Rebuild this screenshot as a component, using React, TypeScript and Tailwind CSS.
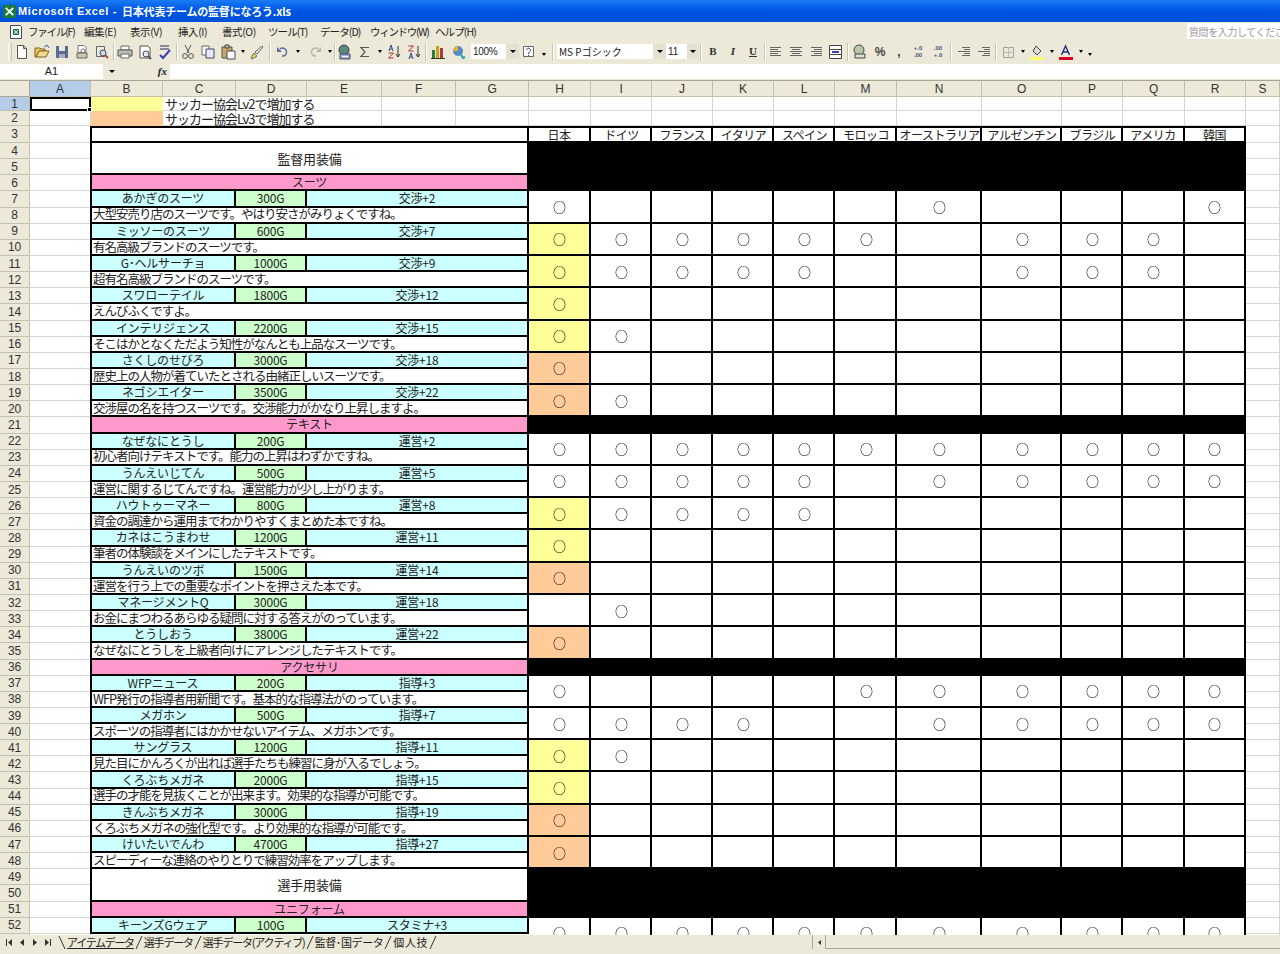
import { ReactNode } from 'react';

const gothic = 'font-["Noto_Sans_CJK_JP","Liberation_Sans",sans-serif]';

const cols = ['A', 'B', 'C', 'D', 'E', 'F', 'G', 'H', 'I', 'J', 'K', 'L', 'M', 'N', 'O', 'P', 'Q', 'R', 'S'];
const countries = ['日本', 'ドイツ', 'フランス', 'イタリア', 'スペイン', 'モロッコ', 'オーストラリア', 'アルゼンチン', 'ブラジル', 'アメリカ', '韓国'];
const markCols = 'HIJKLMNOPQR';
const lastRow = 53;

interface Item {
  row: number;
  name: string;
  price: string;
  effect: string;
  desc: string;
  marks: string;
  tint?: 'y' | 'o';
}

const items: Item[] = [
  { row: 7, name: 'あかぎのスーツ', price: '300G', effect: '交渉+2', desc: '大型安売り店のスーツです。やはり安さがみりょくですね。', marks: 'HNR' },
  { row: 9, name: 'ミッソーのスーツ', price: '600G', effect: '交渉+7', desc: '有名高級ブランドのスーツです。', marks: 'HIJKLMOPQ', tint: 'y' },
  { row: 11, name: 'G･ヘルサーチョ', price: '1000G', effect: '交渉+9', desc: '超有名高級ブランドのスーツです。', marks: 'HIJKLOPQ', tint: 'y' },
  { row: 13, name: 'スワローテイル', price: '1800G', effect: '交渉+12', desc: 'えんびふくですよ。', marks: 'H', tint: 'y' },
  { row: 15, name: 'インテリジェンス', price: '2200G', effect: '交渉+15', desc: 'そこはかとなくただよう知性がなんとも上品なスーツです。', marks: 'HI', tint: 'y' },
  { row: 17, name: 'さくしのせびろ', price: '3000G', effect: '交渉+18', desc: '歴史上の人物が着ていたとされる由緒正しいスーツです。', marks: 'H', tint: 'o' },
  { row: 19, name: 'ネゴシエイター', price: '3500G', effect: '交渉+22', desc: '交渉屋の名を持つスーツです。交渉能力がかなり上昇しますよ。', marks: 'HI', tint: 'o' },
  { row: 22, name: 'なぜなにとうし', price: '200G', effect: '運営+2', desc: '初心者向けテキストです。能力の上昇はわずかですね。', marks: 'HIJKLMNOPQR' },
  { row: 24, name: 'うんえいじてん', price: '500G', effect: '運営+5', desc: '運営に関するじてんですね。運営能力が少し上がります。', marks: 'HIJKLNOPQR' },
  { row: 26, name: 'ハウトゥーマネー', price: '800G', effect: '運営+8', desc: '資金の調達から運用までわかりやすくまとめた本ですね。', marks: 'HIJKL', tint: 'y' },
  { row: 28, name: 'カネはこうまわせ', price: '1200G', effect: '運営+11', desc: '筆者の体験談をメインにしたテキストです。', marks: 'H', tint: 'y' },
  { row: 30, name: 'うんえいのツボ', price: '1500G', effect: '運営+14', desc: '運営を行う上での重要なポイントを押さえた本です。', marks: 'H', tint: 'o' },
  { row: 32, name: 'マネージメントQ', price: '3000G', effect: '運営+18', desc: 'お金にまつわるあらゆる疑問に対する答えがのっています。', marks: 'I' },
  { row: 34, name: 'とうしおう', price: '3800G', effect: '運営+22', desc: 'なぜなにとうしを上級者向けにアレンジしたテキストです。', marks: 'H', tint: 'o' },
  { row: 37, name: 'WFPニュース', price: '200G', effect: '指導+3', desc: 'WFP発行の指導者用新聞です。基本的な指導法がのっています。', marks: 'HMNOPQR' },
  { row: 39, name: 'メガホン', price: '500G', effect: '指導+7', desc: 'スポーツの指導者にはかかせないアイテム、メガホンです。', marks: 'HIJKNOPQR' },
  { row: 41, name: 'サングラス', price: '1200G', effect: '指導+11', desc: '見た目にかんろくが出れば選手たちも練習に身が入るでしょう。', marks: 'HI', tint: 'y' },
  { row: 43, name: 'くろぶちメガネ', price: '2000G', effect: '指導+15', desc: '選手の才能を見抜くことが出来ます。効果的な指導が可能です。', marks: 'H', tint: 'y' },
  { row: 45, name: 'きんぶちメガネ', price: '3000G', effect: '指導+19', desc: 'くろぶちメガネの強化型です。より効果的な指導が可能です。', marks: 'H', tint: 'o' },
  { row: 47, name: 'けいたいでんわ', price: '4700G', effect: '指導+27', desc: 'スピーディーな連絡のやりとりで練習効率をアップします。', marks: 'H', tint: 'o' },
  { row: 52, name: 'キーンズGウェア', price: '100G', effect: 'スタミナ+3', desc: '', marks: 'HIJKLMNOPQR' },
];

const sections = [
  { row: 6, label: 'スーツ' },
  { row: 21, label: 'テキスト' },
  { row: 36, label: 'アクセサリ' },
  { row: 51, label: 'ユニフォーム' },
];

const heads = [
  { row: 4, label: '監督用装備' },
  { row: 49, label: '選手用装備' },
];

const menus = [
  { label: 'ファイル(F)', className: 'w-[56px] tracking-[-1.2px]' },
  { label: '編集(E)', className: 'w-[46px] tracking-[-0.4px]' },
  { label: '表示(V)', className: 'w-[48px] tracking-[-0.4px]' },
  { label: '挿入(I)', className: 'w-[44px] tracking-[-0.4px]' },
  { label: '書式(O)', className: 'w-[46px] tracking-[-0.4px]' },
  { label: 'ツール(T)', className: 'w-[52px] tracking-[-0.9px]' },
  { label: 'データ(D)', className: 'w-[50px] tracking-[-0.9px]' },
  { label: 'ウィンドウ(W)', className: 'w-[65px] tracking-[-1.3px]' },
  { label: 'ヘルプ(H)', className: 'w-[45px] tracking-[-0.9px]' },
];

const tabs = [
  { label: '選手データ', className: 'tracking-[-1.2px]' },
  { label: '選手データ(アクティブ)', className: 'tracking-[-1.2px]' },
  { label: '監督･国データ', className: 'tracking-[-0.4px]' },
  { label: '個人技', className: 'tracking-[0.6px]' },
];

// grid column number of a sheet column letter (the row header takes the first track)
const colOf = (c: string) => cols.indexOf(c) + 2;

// the right border pulls these columns' content 1px left of the reference
const nudge = (c: string) => (c === 'H' || c === 'Q' || c === 'R' ? '' : 'pl-[2px]');

const Cell = ({
  from,
  to = from,
  row,
  span = 1,
  className = '',
  children,
}: {
  from: string;
  to?: string;
  row: number;
  span?: number;
  className?: string;
  children?: ReactNode;
}) => (
  <div
    className={`flex items-center justify-center whitespace-nowrap leading-none ${className}`}
    style={{ gridColumn: `${colOf(from)} / ${colOf(to) + 1}`, gridRow: `${row + 1} / span ${span}` }}
  >
    {children}
  </div>
);

const Sep = ({ w = 3 }: { w?: number }) => (
  <div className="flex shrink-0 justify-center" style={{ width: w }}>
    <div className="h-[18px] w-[2px] shrink-0 border-x border-l-[#c9c5b2] border-r-white" />
  </div>
);

// one toolbar button: a 20px slot with its 16px picture in the middle
const Btn = ({ children, className = '' }: { children: ReactNode; className?: string }) => (
  <div className={`flex w-[20px] shrink-0 items-center justify-center ${className}`}>
    <svg width="16" height="16" viewBox="0 0 16 16">
      {children}
    </svg>
  </div>
);

const Drop = ({ className = '' }: { className?: string }) => (
  <div className={`flex w-[9px] shrink-0 justify-center ${className}`}>
    <span className="h-0 w-0 border-x-[2.5px] border-t-[3px] border-x-transparent border-t-black" />
  </div>
);

const Caret = ({ w = 'w-[13px]' }: { w?: string }) => (
  <div className={`flex h-[15px] shrink-0 items-center justify-center bg-[#e4e1d0] ${w}`}>
    <span className="h-0 w-0 border-x-[3px] border-t-[3px] border-x-transparent border-t-black" />
  </div>
);

const Lines = ({ rows }: { rows: number[][] }) => (
  <Btn>
    {rows.map(([x1, x2], i) => (
      <path key={i} d={`M${x1} ${3 + i * 2}.5H${x2}`} stroke="#666" />
    ))}
  </Btn>
);

const Toolbar = () => (
  <div className="flex h-[21px] shrink-0 items-center bg-[#ece9d8] pl-[8px] text-[10px] text-[#222]">
    <div className="h-[18px] w-[4px] shrink-0 border-x border-l-white border-r-[#c9c5b2]" />
    <Btn><path d="M3.5 1.5h6l3 3v10h-9z" fill="#fff" stroke="#555" /><path d="M9.5 1.5v3h3" fill="none" stroke="#555" /></Btn>
    <Btn><path d="M1 4h5l1 1h4v2H5l-3 6H1z" fill="#e8c860" stroke="#806020" /><path d="M2 13l3-6h10l-3 6z" fill="#f2dc88" stroke="#806020" /><path d="M10 3l3-2 2 3" fill="none" stroke="#3a5a9a" /></Btn>
    <Btn><path d="M2 2h12v12H2z" fill="#5a6a8a" /><path d="M5 2h6v5H5z" fill="#e6e6e6" /><path d="M5 10h6v4H5z" fill="#a6aebc" /></Btn>
    <Btn><path d="M4 1.5h6l2 2v5H4z" fill="#fff" stroke="#777" /><path d="M7 9V7a2 2 0 0 1 4 0v2" fill="none" stroke="#666" /><path d="M3 9h10v5H3z" fill="#c8c8b0" stroke="#666" /></Btn>
    <Btn><path d="M2.5 2.5h8v10h-8z" fill="#e8ecd8" stroke="#667" /><circle cx="9" cy="9" r="3" fill="#c8dcec" stroke="#446" /><path d="M11 11l3 3" stroke="#c04040" strokeWidth="2" /></Btn>
    <Sep />
    <Btn><path d="M4 2h8v4H4z" fill="#fff" stroke="#666" /><path d="M1 6h14v6H1z" fill="#bdbdb0" stroke="#555" /><path d="M4 10h8v4H4z" fill="#fff" stroke="#666" /></Btn>
    <Btn><path d="M3 2h8l2 2v10H3z" fill="#fff" stroke="#555" /><circle cx="9" cy="10" r="3" fill="#dfe8ee" stroke="#445" /><path d="M11 12l3 3" stroke="#555" strokeWidth="2" /></Btn>
    <Btn><path d="M3 2h9M3 5h9" stroke="#889" strokeWidth="2" /><path d="M3 11l3 3 7-8" fill="none" stroke="#3a3ac0" strokeWidth="2" /></Btn>
    <Sep />
    <Btn><path d="M5 1l4 8M11 1l-4 8" stroke="#555" fill="none" /><circle cx="5" cy="12" r="2.4" fill="none" stroke="#555" /><circle cx="11" cy="12" r="2.4" fill="none" stroke="#555" /></Btn>
    <Btn><path d="M2 2h7v9H2z" fill="#fff" stroke="#666" /><path d="M6 5h8v9H6z" fill="#e8e8f8" stroke="#446" /></Btn>
    <Btn><path d="M2 3h10v11H2z" fill="#c8a868" stroke="#554" /><path d="M5 1h4v3H5z" fill="#bbb" stroke="#444" /><path d="M7 7h8v8H7z" fill="#fff" stroke="#446" /></Btn>
    <Drop />
    <Btn><path d="M2 14l3-5 3 3-5 3z" fill="#f2d84a" stroke="#666" /><path d="M6 8l7-6 1 1-6 7z" fill="#eee" stroke="#666" /></Btn>
    <Sep w={6} />
    <Btn><path d="M5 5a4 4 0 1 1 2 7" fill="none" stroke="#5a6f9c" strokeWidth="1.4" /><path d="M2 3v5h5z" fill="#5a6f9c" /></Btn>
    <Drop />
    <Btn className="ml-[3px]"><path d="M11 5a4 4 0 1 0-2 7" fill="none" stroke="#b4b4a8" strokeWidth="1.4" /><path d="M14 3v5H9z" fill="#b4b4a8" /></Btn>
    <Drop />
    <Sep w={1} />
    <Btn><circle cx="7" cy="6" r="5" fill="#5a8a7a" stroke="#345" /><path d="M3 10h10v5H3z" fill="#9ab0d0" stroke="#446" /><path d="M5 12.5h6" stroke="#fff" /></Btn>
    <Btn><path d="M12 3.5H4l4 4.5-4 4.5h8" fill="none" stroke="#555" strokeWidth="1.2" /></Btn>
    <Drop className="w-[8px]" />
    <Btn><path d="M3 7l2-6 2 6M4 5h2" fill="none" stroke="#2a4aa0" /><path d="M2.5 9h5l-5 5h5" fill="none" stroke="#b03030" /><path d="M12 2v11M10 10l2 3 2-3" fill="none" stroke="#333" /></Btn>
    <Btn><path d="M2.5 2h5l-5 5h5" fill="none" stroke="#b03030" /><path d="M3 15l2-6 2 6M4 13h2" fill="none" stroke="#2a4aa0" /><path d="M12 2v11M10 10l2 3 2-3" fill="none" stroke="#333" /></Btn>
    <Sep w={4} />
    <Btn><path d="M2 6h3v8H2z" fill="#2f7a3a" /><path d="M6 2h3v12H6z" fill="#c8a020" /><path d="M10 4h3v10h-3z" fill="#b03a3a" /><path d="M1 14.5h14" stroke="#333" /></Btn>
    <Btn><circle cx="8" cy="7" r="5" fill="#5a8ac0" /><path d="M3 7a5 5 0 0 1 5-5v5z" fill="#e0b040" /><path d="M10 9l3 5 2-1" stroke="#2aa0c0" strokeWidth="2" fill="none" /></Btn>
    <div className="ml-[3px] flex h-[15px] w-[35px] shrink-0 items-center bg-white pl-[2px] font-['Liberation_Sans',sans-serif] text-[10px] tracking-[-0.3px]">100%</div>
    <Caret />
    <Btn><path d="M2.5 2.5h10v10h-10z" fill="#fff" stroke="#667" /><path d="M5.5 6a2 2 0 1 1 3 2l-1 1v1M7.5 11v1" fill="none" stroke="#445" /></Btn>
    <Drop className="mt-[6px]" />
    <Sep w={9} />
    <div className="flex h-[15px] w-[96px] shrink-0 items-center bg-white pl-[2px] text-[10px]">MS Pゴシック</div>
    <Caret />
    <div className="flex h-[15px] w-[21px] shrink-0 items-center bg-white pl-[2px] font-['Liberation_Sans',sans-serif] text-[10px]">11</div>
    <Caret w="w-[12px]" />
    <Sep w={4} />
    <div className="grid w-[60px] shrink-0 grid-cols-3 justify-items-center font-['Liberation_Serif',serif] text-[11px] font-bold text-[#333]">
      <span>B</span>
      <i>I</i>
      <u>U</u>
    </div>
    <Sep />
    <Lines rows={[[2, 13], [2, 10], [2, 13], [2, 10], [2, 13]]} />
    <Lines rows={[[2, 14], [4, 12], [2, 14], [4, 12], [2, 14]]} />
    <Lines rows={[[3, 14], [6, 14], [3, 14], [6, 14], [3, 14]]} />
    <Btn><path d="M1.5 1.5h12v13h-12z" fill="#fff" stroke="#444" /><path d="M1 5.5h13M1 10.5h13" stroke="#444" /><path d="M4 8h7" stroke="#3a3ac0" strokeWidth="2" /></Btn>
    <Sep w={4} />
    <Btn><circle cx="7" cy="6" r="5" fill="#bcc8a8" stroke="#445" /><path d="M3 10h10v4H3z" fill="#dbe4c8" stroke="#445" /></Btn>
    <span className="w-[20px] shrink-0 text-center font-['Liberation_Sans',sans-serif] text-[12px] font-bold text-[#444]">%</span>
    <span className="w-[18px] shrink-0 text-center font-['Liberation_Sans',sans-serif] text-[12px] font-bold text-[#444]">,</span>
    <span className="w-[20px] shrink-0 text-center font-['Liberation_Sans',sans-serif] text-[6px] leading-[7px] font-bold text-[#445a80]">+.0<br />.00</span>
    <span className="w-[20px] shrink-0 text-center font-['Liberation_Sans',sans-serif] text-[6px] leading-[7px] font-bold text-[#445a80]">.00<br />+.0</span>
    <Sep w={6} />
    <Lines rows={[[6, 14], [8, 14], [2, 14], [8, 14], [6, 14]]} />
    <Lines rows={[[6, 14], [8, 14], [2, 14], [8, 14], [6, 14]]} />
    <Sep w={4} />
    <Btn><path d="M3.5 3.5h10v10h-10z" fill="none" stroke="#a0a0a0" /><path d="M3 8.5h11M8.5 3v11" stroke="#bcbcbc" /></Btn>
    <Drop />
    <Btn><path d="M4 7l3-5 5 5-4 4z" fill="#ddd" stroke="#444" /><path d="M1 13h13v3H1z" fill="#ffff66" /></Btn>
    <Drop />
    <Btn><path d="M3.5 11l4-9 4 9M5 8h5" fill="none" stroke="#1f2f80" strokeWidth="1.4" /><path d="M1 13h14v3H1z" fill="#d8001c" /></Btn>
    <Drop />
    <Drop className="mt-[6px]" />
  </div>
);

const headerCell = "flex items-center justify-center border-r border-b border-[#c4c0ae] font-['Liberation_Sans',sans-serif] text-[12px] text-[#333]";

const Sheet = () => (
  <div className="grid min-h-0 flex-1 grid-cols-[30px_61px_72px_73px_71px_75px_74px_73px_62px_61px_61px_61px_61px_62px_85px_80px_61px_62px_61px_34px] grid-rows-[16px_14px_15px_17px] auto-rows-[16.15px] overflow-hidden border-t border-[#a8a496] bg-white text-[12px] tracking-[-0.2px] text-[#222]">
    {/* column headers */}
    <div className="border-r border-b border-[#a8a496] bg-[#ece9d8]" />
    {cols.map((c) => (
      <div key={c} className={`${headerCell} ${c === 'A' ? 'bg-[#b6cdea]' : 'bg-[#ece9d8]'}`}>
        {c}
      </div>
    ))}
    {/* row headers and light cell grid, painted under everything else */}
    {Array.from({ length: lastRow }, (_, i) => i + 1).map((r) => (
      <div key={r} className={`${headerCell} ${r === 1 ? 'bg-[#b6cdea]' : 'bg-[#ece9d8]'}`} style={{ gridColumn: 1, gridRow: r + 1 }}>
        {r}
      </div>
    ))}
    {Array.from({ length: lastRow }, (_, i) => i + 1).flatMap((r) =>
      cols
        .filter((c) => r < 3 || c === 'A' || c === 'S')
        .map((c) => <Cell key={`${c}${r}`} from={c} row={r} className="border-r border-b border-[#d6d6d6]" />)
    )}

    <Cell from="A" row={1} className="relative border-2 border-black">
      <span className="absolute -right-[3px] -bottom-[3px] h-[5px] w-[5px] border border-white bg-black" />
    </Cell>
    <Cell from="B" row={1} className="bg-[#ffff99]" />
    <Cell from="B" row={2} className="bg-[#ffcc99]" />
    <Cell from="C" to="E" row={1} className="!justify-start pb-[1px] pl-[2px] text-[13px] tracking-[-1px]">サッカー協会Lv2で増加する</Cell>
    <Cell from="C" to="E" row={2} className="!justify-start pl-[2px] text-[13px] tracking-[-1px]">サッカー協会Lv3で増加する</Cell>

    <Cell from="B" to="G" row={3} className="-ml-px border-2 border-black" />
    {countries.map((name, i) => (
      <Cell key={name} from={markCols[i]} row={3} className={`border-y-2 border-r-2 border-black tracking-[-0.5px] ${nudge(markCols[i])}`}>
        {name}
      </Cell>
    ))}

    {heads.map((h) => (
      <Cell key={h.row} from="B" to="G" row={h.row} span={2} className="-ml-px border-x-2 border-b-2 border-black text-[13px]">
        {h.label}
      </Cell>
    ))}
    {[4, 49].map((r) => (
      <Cell key={r} from="H" to="R" row={r} span={3} className="bg-black" />
    ))}
    {sections.map((s) => (
      <Cell key={s.row} from="B" to="G" row={s.row} className="-ml-px border-x-2 border-b-2 border-black bg-[#ff99cc]">
        {s.label}
      </Cell>
    ))}
    {[21, 36].map((r) => (
      <Cell key={r} from="H" to="R" row={r} className="bg-black" />
    ))}

    {items.map((it) => (
      <ItemRows key={it.row} item={it} />
    ))}
  </div>
);

const ItemRows = ({ item }: { item: Item }) => (
  <>
    <Cell from="B" to="C" row={item.row} className="-ml-px border-x-2 border-b-2 border-black bg-[#ccffff]">{item.name}</Cell>
    <Cell from="D" row={item.row} className="border-r-2 border-b-2 border-black bg-[#ccffcc]">{item.price}</Cell>
    <Cell from="E" to="G" row={item.row} className="border-r-2 border-b-2 border-black bg-[#ccffff]">{item.effect}</Cell>
    {item.desc && (
      <Cell from="B" to="G" row={item.row + 1} className="-ml-px !justify-start border-x-2 border-b-2 border-black pl-[1px] text-[12.5px] tracking-[-1px]">
        {item.desc}
      </Cell>
    )}
    {markCols.split('').map((c) => (
      <Cell
        key={c}
        from={c}
        row={item.row}
        span={2}
        className={`border-r-2 border-b-2 border-black ${nudge(c)} ${c === 'H' && item.tint === 'y' ? 'bg-[#ffff99]' : c === 'H' && item.tint === 'o' ? 'bg-[#ffcc99]' : 'bg-white'}`}
      >
        {item.marks.includes(c) && <span className="text-[13px] font-medium text-black will-change-transform">○</span>}
      </Cell>
    ))}
  </>
);

const Nav = ({ d }: { d: string }) => (
  <svg width="7" height="7" viewBox="0 0 7 7">
    <path d={d} fill="#333" />
  </svg>
);

// slanted edge between two sheet tabs
const TabEdge = ({ d = 'M1 14L7 1' }: { d?: string }) => (
  <svg width="10" height="14" viewBox="0 0 8 14" className="shrink-0">
    <path d={d} stroke="#333" fill="none" />
  </svg>
);

const App = () => (
  <div className={`flex h-[954px] w-[1280px] flex-col overflow-hidden bg-[#ece9d8] ${gothic}`}>
    <div className="flex h-[22px] shrink-0 items-center bg-gradient-to-b from-[#1a7cf6] via-[#0054e3] to-[#0050d8] pl-[3px] text-[11px] font-bold text-white">
      <svg width="13" height="13" viewBox="0 0 14 14" className="mr-[2px]">
        <path d="M0 0h14v14H0z" fill="#1c7a3c" />
        <path d="M3 3l8 8M11 3l-8 8" stroke="#fff" strokeWidth="2" />
      </svg>
      <span className="w-[104px] shrink-0 font-['Liberation_Sans',sans-serif] tracking-[0.65px]">Microsoft Excel -</span>
      <span className="tracking-[-0.2px]">日本代表チームの監督になろう.xls</span>
    </div>

    <div className="relative flex h-[19px] shrink-0 items-center bg-[#ece9d8] pl-[8px] text-[10.5px] text-[#222]">
      <svg width="16" height="16" viewBox="0 0 16 16" className="mr-[4px]">
        <path d="M2.5 1.5h10l1 1v12h-11z" fill="#fff" stroke="#446" />
        <path d="M5 5h6v6H5z" fill="#1c7a3c" />
        <path d="M6 6l4 4M10 6l-4 4" stroke="#fff" />
      </svg>
      <div className="flex">
        {menus.map((m) => (
          <span key={m.label} className={`shrink-0 whitespace-nowrap ${m.className}`}>{m.label}</span>
        ))}
      </div>
      <div className="absolute top-[1px] right-0 flex h-[16px] w-[93px] items-center overflow-hidden whitespace-nowrap bg-white pl-[2px] text-[10px] tracking-[-0.4px] text-[#999]">質問を入力してください</div>
    </div>

    <Toolbar />

    <div className="flex h-[18px] shrink-0 items-center text-[11px] text-[#222]">
      <div className="flex h-[15px] w-[103px] items-center justify-center bg-white font-['Liberation_Sans',sans-serif]">A1</div>
      <div className="flex w-[17px] items-center justify-center">
        <span className="h-0 w-0 border-x-[3px] border-t-[3px] border-x-transparent border-t-black" />
      </div>
      <div className="flex w-[50px] items-center justify-end pr-[3px] font-['Liberation_Serif',serif] text-[11px] font-bold italic">fx</div>
      <div className="h-[15px] flex-1 bg-white" />
    </div>

    <Sheet />

    <div className="flex h-[19px] shrink-0 bg-[#ece9d8] text-[11px] text-[#222]">
      <div className="flex w-[57px] shrink-0 items-center justify-around px-[3px] pb-[4px]">
        <Nav d="M0 0h1v7H0zM6 0v7L2 3.5z" />
        <Nav d="M5 0v7L1 3.5z" />
        <Nav d="M2 0v7l4-3.5z" />
        <Nav d="M1 0v7l4-3.5zM6 0h1v7H6z" />
      </div>
      <div className="flex h-[14px] w-[755px] shrink-0 items-center whitespace-nowrap">
        <TabEdge d="M1 1L7 14" />
        <span className="tracking-[-1.3px] underline">アイテムデータ</span>
        {tabs.map((t) => (
          <span key={t.label} className="flex items-center">
            <TabEdge />
            <span className={t.className}>{t.label}</span>
          </span>
        ))}
        <TabEdge />
      </div>
      <div className="flex h-[14px] w-[14px] shrink-0 items-center justify-center border-x border-[#aaa69a]">
        <Nav d="M5 1v5L2 3.5z" />
      </div>
      <div className="h-[14px] flex-1 border-b border-[#aaa69a]" />
    </div>
  </div>
);

export default App;
